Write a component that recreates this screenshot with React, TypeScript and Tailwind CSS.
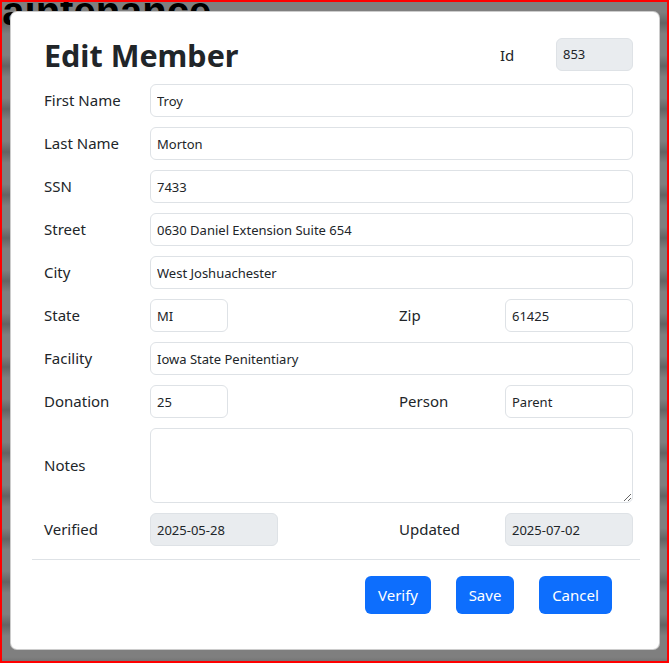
import React from "react";

const font = { fontFamily: '"Noto Sans", "Open Sans", sans-serif' };

function Field({ value, w, disabled }: { value: string; w?: string; disabled?: boolean }) {
  return (
    <input
      readOnly
      value={value}
      className={`h-[33px] ${w ?? "flex-1 min-w-0"} rounded-[6px] border border-[#dee2e6] px-[6px] text-[13px] text-[#212529] outline-none ${
        disabled ? "bg-[#e9ecef]" : "bg-white"
      }`}
    />
  );
}

function Label({ children }: { children: React.ReactNode }) {
  return <div className="w-[106px] shrink-0 text-[15px] text-[#212529]">{children}</div>;
}

function Row({ label, value }: { label: string; value: string }) {
  return (
    <div className="mt-[10px] flex items-center">
      <Label>{label}</Label>
      <Field value={value} />
    </div>
  );
}

function SplitRow({
  l1,
  v1,
  w1,
  l2,
  v2,
  disabled,
}: {
  l1: string;
  v1: string;
  w1: string;
  l2: string;
  v2: string;
  disabled?: boolean;
}) {
  return (
    <div className="mt-[10px] flex items-center">
      <div className="flex w-[355px] items-center">
        <Label>{l1}</Label>
        <Field value={v1} w={w1} disabled={disabled} />
      </div>
      <div className="flex items-center">
        <Label>{l2}</Label>
        <Field value={v2} w="w-[128px]" disabled={disabled} />
      </div>
    </div>
  );
}

export default function App() {
  return (
    <div
      className="relative h-[663px] w-[669px] overflow-hidden border-2 border-[#ff0000] bg-[repeating-linear-gradient(180deg,#ffffff_0px,#ffffff_10px,#c8c8c8_21px,#ffffff_32px,#ffffff_43px)]"
      style={font}
    >
      <div
        className="absolute left-[-33px] top-[-11px] whitespace-nowrap text-[40px] font-bold leading-[40px] text-black"
        style={{ fontFamily: '"Liberation Sans", Arial, sans-serif' }}
      >
        Maintenance
      </div>
      <div className="absolute inset-0 bg-black/50">
        <div className="ml-[8px] mt-[9px] h-[639px] w-[650px] rounded-[7px] border border-black/20 bg-white pl-[33px] pr-[26px] pt-[26px]">
          <div className="flex h-[32px] items-center">
            <h1 className="flex-1 pt-[2px] text-[30.5px] font-bold leading-none text-[#212529]">Edit Member</h1>
            <div className="w-[56px] pt-[2px] text-[15px] text-[#212529]">Id</div>
            <Field value="853" w="w-[77px]" disabled />
          </div>
          <div className="mt-[14px] flex items-center">
            <Label>First Name</Label>
            <Field value="Troy" />
          </div>
          <Row label="Last Name" value="Morton" />
          <Row label="SSN" value="7433" />
          <Row label="Street" value="0630 Daniel Extension Suite 654" />
          <Row label="City" value="West Joshuachester" />
          <SplitRow l1="State" v1="MI" w1="w-[78px]" l2="Zip" v2="61425" />
          <Row label="Facility" value="Iowa State Penitentiary" />
          <SplitRow l1="Donation" v1="25" w1="w-[78px]" l2="Person" v2="Parent" />
          <div className="mt-[10px] flex items-center">
            <Label>Notes</Label>
            <textarea
              readOnly
              className="h-[75px] min-w-0 flex-1 resize-y rounded-[6px] border border-[#dee2e6] bg-white px-[6px] text-[13px] outline-none"
            />
          </div>
          <SplitRow l1="Verified" v1="2025-05-28" w1="w-[128px]" l2="Updated" v2="2025-07-02" disabled />
          <div className="-ml-[12px] -mr-[7px] mt-[13px] h-px bg-[#dee2e6]" />
          <div className="mr-[21px] mt-[16px] flex justify-end gap-[25px]">
            <button className="h-[38px] w-[66px] rounded-[6px] bg-[#0d6efd] text-[15px] text-white">Verify</button>
            <button className="h-[38px] w-[58px] rounded-[6px] bg-[#0d6efd] text-[15px] text-white">Save</button>
            <button className="h-[38px] w-[73px] rounded-[6px] bg-[#0d6efd] text-[15px] text-white">Cancel</button>
          </div>
        </div>
      </div>
    </div>
  );
}
